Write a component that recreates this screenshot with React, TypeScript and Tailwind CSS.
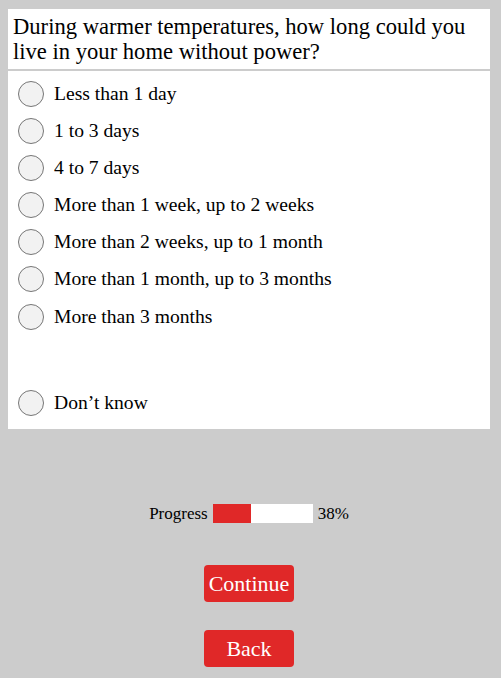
import React from "react";

const options = [
  "Less than 1 day",
  "1 to 3 days",
  "4 to 7 days",
  "More than 1 week, up to 2 weeks",
  "More than 2 weeks, up to 1 month",
  "More than 1 month, up to 3 months",
  "More than 3 months",
];

function Radio({ label }: { label: string }) {
  return (
    <label className="flex items-center h-[37.17px] gap-[10px] cursor-pointer">
      <span className="w-[26px] h-[26px] rounded-full border border-[#767676] bg-[#f2f2f2] shrink-0" />
      <span className="text-[19.6px] leading-[24px] text-black">{label}</span>
    </label>
  );
}

export default function App() {
  return (
    <div className="min-h-[678px] bg-[#cccccc] pl-[8px] pr-[11px] pt-[9px] font-['Liberation_Serif',serif]">
      <div className="bg-white px-[5px] pt-[5px] pb-[5px]">
        <h1 className="text-[22.6px] leading-[25px] text-black">
          During warmer temperatures, how long could you live in your home without power?
        </h1>
      </div>
      <div className="h-[2px] bg-[#cccccc]" />
      <div className="bg-white px-[10px] pt-[4px] pb-[8px]">
        {options.map((o) => (
          <Radio key={o} label={o} />
        ))}
        <div className="h-[49px]" />
        <Radio label="Don’t know" />
      </div>

      <div className="flex items-center justify-center mt-[75px] gap-[5px] text-[17px] leading-[19px] text-black">
        <span>Progress</span>
        <div className="w-[100px] h-[19px] bg-white">
          <div className="h-full bg-[#e02828]" style={{ width: "38%" }} />
        </div>
        <span>38%</span>
      </div>

      <div className="flex flex-col items-center gap-[28px] mt-[42px]">
        <button className="w-[90px] h-[37px] rounded-[4px] bg-[#e02828] text-white text-[22px]">
          Continue
        </button>
        <button className="w-[90px] h-[37px] rounded-[4px] bg-[#e02828] text-white text-[22px]">
          Back
        </button>
      </div>
    </div>
  );
}
